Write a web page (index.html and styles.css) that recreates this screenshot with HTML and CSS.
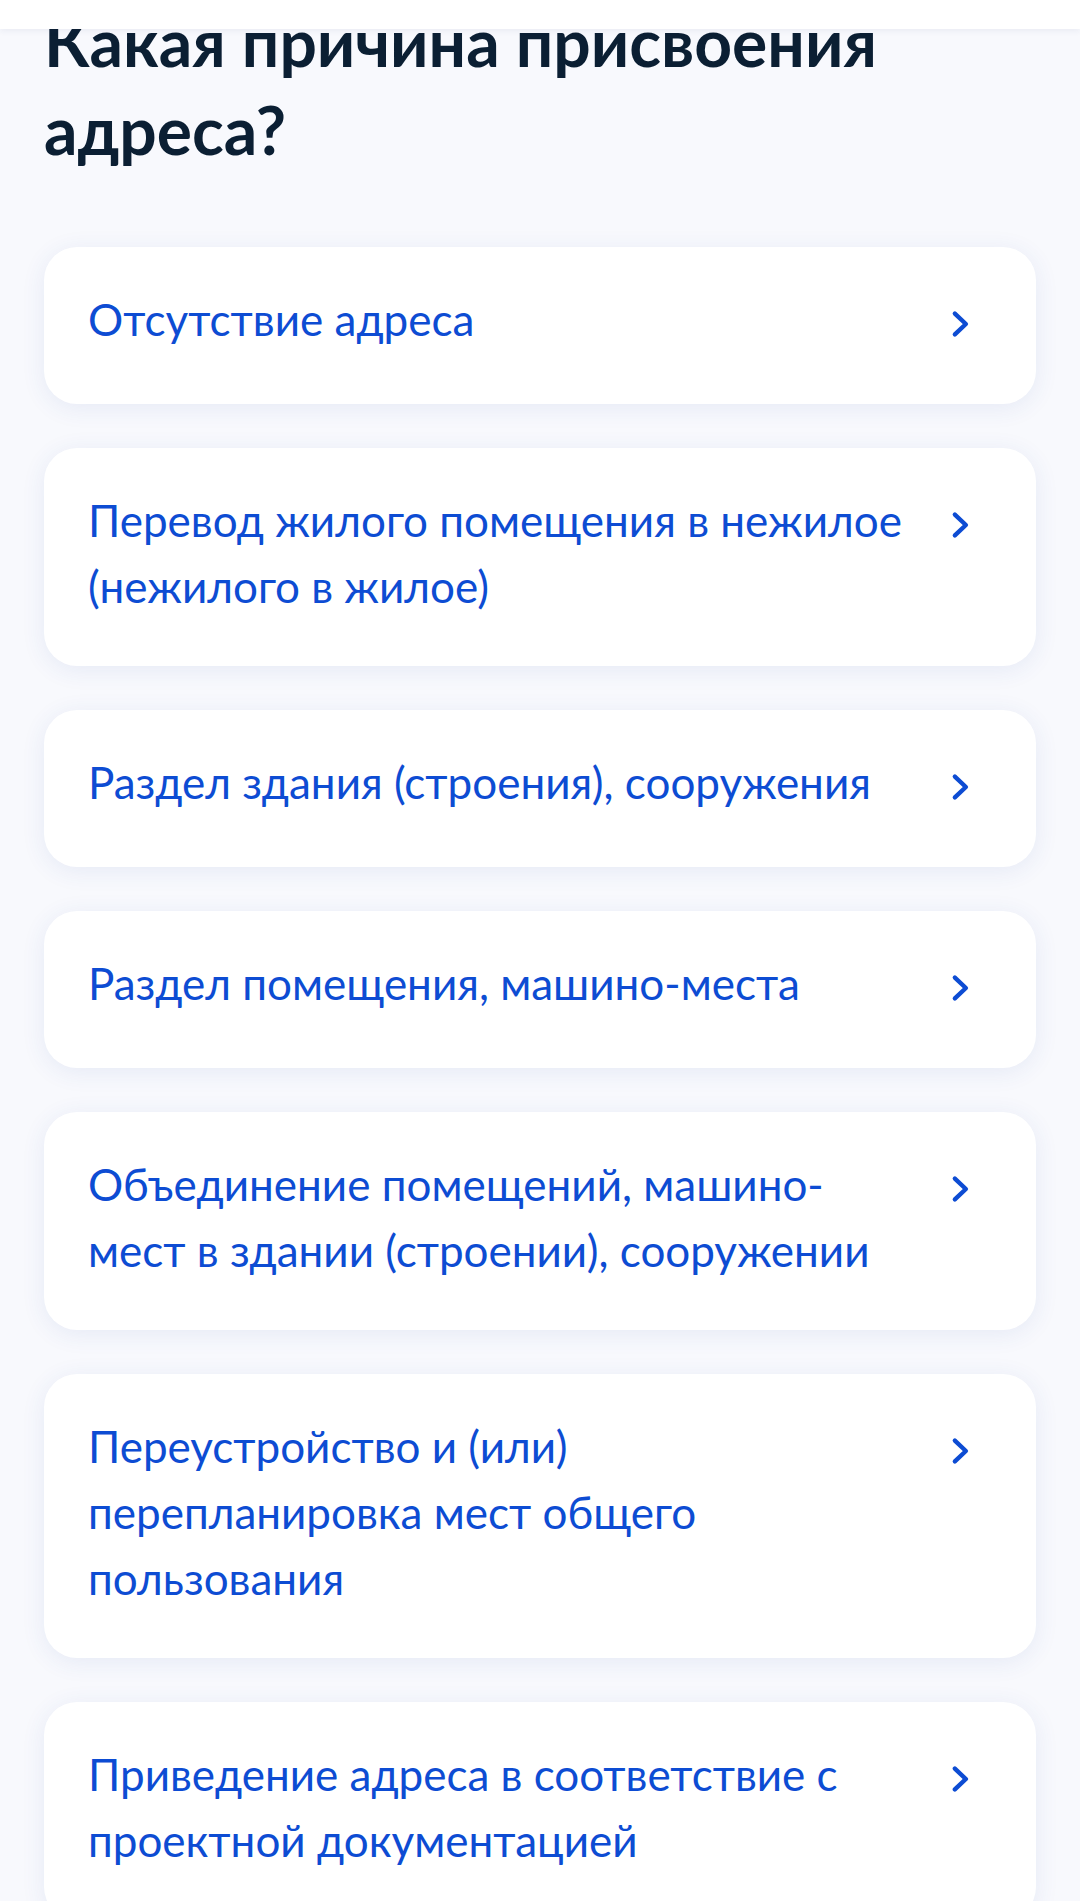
FILE: index.html
```html
<!DOCTYPE html>
<html lang="ru">
<head>
    <meta charset="UTF-8">
    <meta name="viewport" content="width=device-width, initial-scale=1.0">
    <title>Причина присвоения адреса</title>
    <link rel="stylesheet" href="styles.css">
</head>
<body>
    <div class="toolbar"></div>

    <h1 class="title">Какая причина присвоения адреса?</h1>

    <div class="reasons">
        <a class="reason" href="#">
            <span class="reason-text">Отсутствие адреса</span>
            <svg class="chevron" viewBox="0 0 24 24"><path d="M10.5 8.2 L14.5 12 L10.5 15.8"/></svg>
        </a>
        <a class="reason" href="#">
            <span class="reason-text">Перевод жилого помещения в нежилое (нежилого в жилое)</span>
            <svg class="chevron" viewBox="0 0 24 24"><path d="M10.5 8.2 L14.5 12 L10.5 15.8"/></svg>
        </a>
        <a class="reason" href="#">
            <span class="reason-text">Раздел здания (строения), сооружения</span>
            <svg class="chevron" viewBox="0 0 24 24"><path d="M10.5 8.2 L14.5 12 L10.5 15.8"/></svg>
        </a>
        <a class="reason" href="#">
            <span class="reason-text">Раздел помещения, машино-места</span>
            <svg class="chevron" viewBox="0 0 24 24"><path d="M10.5 8.2 L14.5 12 L10.5 15.8"/></svg>
        </a>
        <a class="reason" href="#">
            <span class="reason-text">Объединение помещений, машино-<br>мест в здании (строении), сооружении</span>
            <svg class="chevron" viewBox="0 0 24 24"><path d="M10.5 8.2 L14.5 12 L10.5 15.8"/></svg>
        </a>
        <a class="reason" href="#">
            <span class="reason-text">Переустройство и (или)<br>перепланировка мест общего пользования</span>
            <svg class="chevron" viewBox="0 0 24 24"><path d="M10.5 8.2 L14.5 12 L10.5 15.8"/></svg>
        </a>
        <a class="reason" href="#">
            <span class="reason-text">Приведение адреса в соответствие с проектной документацией</span>
            <svg class="chevron" viewBox="0 0 24 24"><path d="M10.5 8.2 L14.5 12 L10.5 15.8"/></svg>
        </a>
    </div>
</body>
</html>
```

FILE: styles.css
```css
body {
    margin: 0;
    font-family: Lato, "Noto Sans", "Liberation Sans", sans-serif;
    background-color: #f8f9fd;
    overflow: hidden;
}
.toolbar {
    position: fixed;
    top: 0;
    left: 0;
    right: 0;
    height: 29px;
    background-color: #ffffff;
    box-shadow: 0 2px 6px rgba(40, 60, 110, 0.07);
    z-index: 10;
}
.title {
    margin: -2px 0 0;
    padding: 0 44px;
    font-size: 66px;
    line-height: 88px;
    font-weight: 700;
    color: #0b1f33;
}
.reasons {
    display: flex;
    flex-direction: column;
    gap: 44px;
    margin: 73px 44px 0;
}
.reason {
    display: flex;
    align-items: flex-start;
    gap: 16px;
    padding: 39px 44px 47px;
    background-color: #ffffff;
    border-radius: 33px;
    box-shadow: 0 4px 24px rgba(40, 80, 170, 0.09);
    text-decoration: none;
}
.reason-text {
    flex: 1;
    font-size: 44px;
    line-height: 66px;
    color: #0d4cd3;
}
.chevron {
    flex: none;
    width: 66px;
    height: 66px;
    margin-top: 5px;
    fill: none;
    stroke: #0d4cd3;
    stroke-width: 1.6;
    stroke-linecap: round;
    stroke-linejoin: round;
}
```
